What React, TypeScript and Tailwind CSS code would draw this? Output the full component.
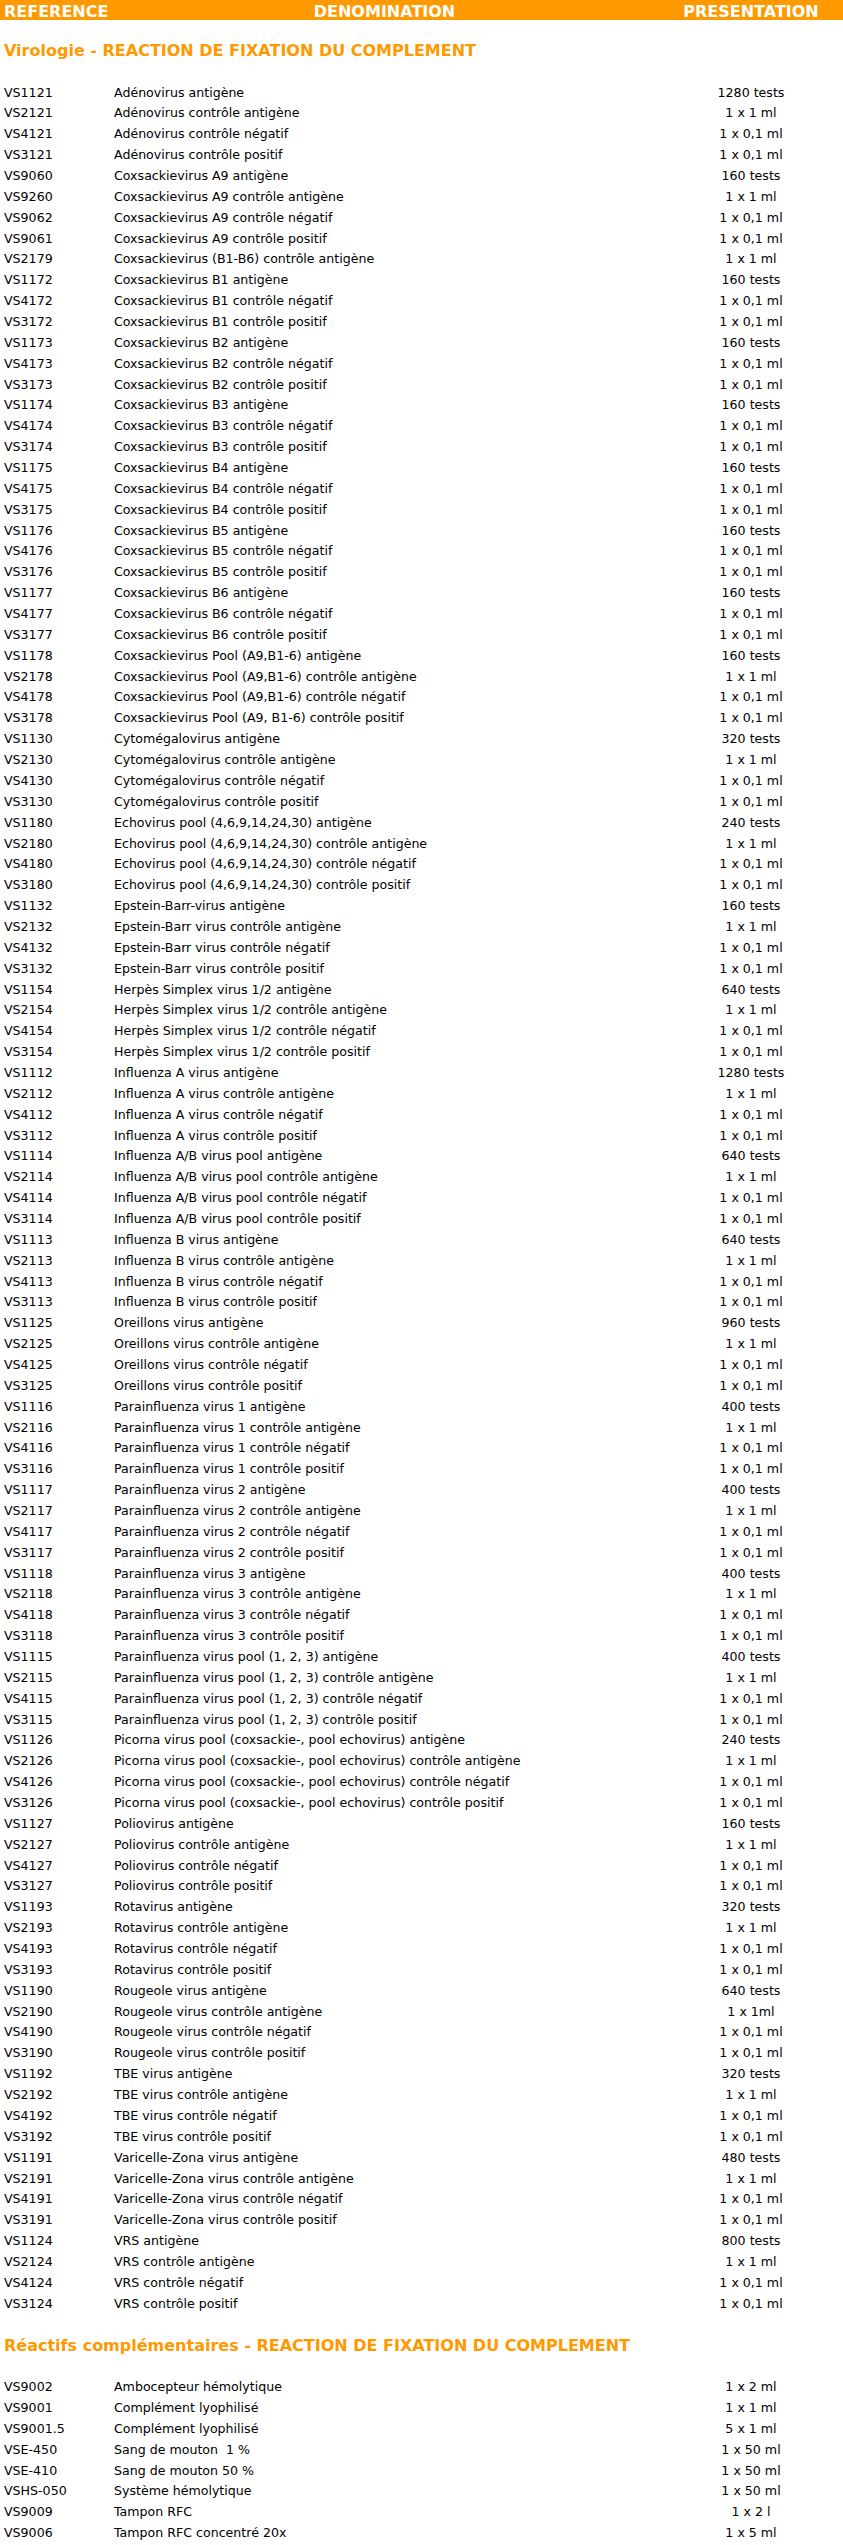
import React from "react";

type Row = [string, string, string];

const quad = (name: string, s: string, tests: string, ctrlAg = "1 x 1 ml"): Row[] => [
  [`VS1${s}`, `${name} antigène`, tests],
  [`VS2${s}`, `${name} contrôle antigène`, ctrlAg],
  [`VS4${s}`, `${name} contrôle négatif`, "1 x 0,1 ml"],
  [`VS3${s}`, `${name} contrôle positif`, "1 x 0,1 ml"],
];

const coxB: Row[] = [1, 2, 3, 4, 5, 6].flatMap((n): Row[] => [
  [`VS117${n + 1}`, `Coxsackievirus B${n} antigène`, "160 tests"],
  [`VS417${n + 1}`, `Coxsackievirus B${n} contrôle négatif`, "1 x 0,1 ml"],
  [`VS317${n + 1}`, `Coxsackievirus B${n} contrôle positif`, "1 x 0,1 ml"],
]);

const virologie: Row[] = [
  ...quad("Adénovirus", "121", "1280 tests"),
  ["VS9060", "Coxsackievirus A9 antigène", "160 tests"],
  ["VS9260", "Coxsackievirus A9 contrôle antigène", "1 x 1 ml"],
  ["VS9062", "Coxsackievirus A9 contrôle négatif", "1 x 0,1 ml"],
  ["VS9061", "Coxsackievirus A9 contrôle positif", "1 x 0,1 ml"],
  ["VS2179", "Coxsackievirus (B1-B6) contrôle antigène", "1 x 1 ml"],
  ...coxB,
  ["VS1178", "Coxsackievirus Pool (A9,B1-6) antigène", "160 tests"],
  ["VS2178", "Coxsackievirus Pool (A9,B1-6) contrôle antigène", "1 x 1 ml"],
  ["VS4178", "Coxsackievirus Pool (A9,B1-6) contrôle négatif", "1 x 0,1 ml"],
  ["VS3178", "Coxsackievirus Pool (A9, B1-6) contrôle positif", "1 x 0,1 ml"],
  ...quad("Cytomégalovirus", "130", "320 tests"),
  ...quad("Echovirus pool (4,6,9,14,24,30)", "180", "240 tests"),
  ["VS1132", "Epstein-Barr-virus antigène", "160 tests"],
  ["VS2132", "Epstein-Barr virus contrôle antigène", "1 x 1 ml"],
  ["VS4132", "Epstein-Barr virus contrôle négatif", "1 x 0,1 ml"],
  ["VS3132", "Epstein-Barr virus contrôle positif", "1 x 0,1 ml"],
  ...quad("Herpès Simplex virus 1/2", "154", "640 tests"),
  ...quad("Influenza A virus", "112", "1280 tests"),
  ...quad("Influenza A/B virus pool", "114", "640 tests"),
  ...quad("Influenza B virus", "113", "640 tests"),
  ...quad("Oreillons virus", "125", "960 tests"),
  ...quad("Parainfluenza virus 1", "116", "400 tests"),
  ...quad("Parainfluenza virus 2", "117", "400 tests"),
  ...quad("Parainfluenza virus 3", "118", "400 tests"),
  ...quad("Parainfluenza virus pool (1, 2, 3)", "115", "400 tests"),
  ...quad("Picorna virus pool (coxsackie-, pool echovirus)", "126", "240 tests"),
  ...quad("Poliovirus", "127", "160 tests"),
  ...quad("Rotavirus", "193", "320 tests"),
  ...quad("Rougeole virus", "190", "640 tests", "1 x 1ml"),
  ...quad("TBE virus", "192", "320 tests"),
  ...quad("Varicelle-Zona virus", "191", "480 tests"),
  ...quad("VRS", "124", "800 tests"),
];

const reactifs: Row[] = [
  ["VS9002", "Ambocepteur hémolytique", "1 x 2 ml"],
  ["VS9001", "Complément lyophilisé", "1 x 1 ml"],
  ["VS9001.5", "Complément lyophilisé", "5 x 1 ml"],
  ["VSE-450", "Sang de mouton\u00a0 1 %", "1 x 50 ml"],
  ["VSE-410", "Sang de mouton 50 %", "1 x 50 ml"],
  ["VSHS-050", "Système hémolytique", "1 x 50 ml"],
  ["VS9009", "Tampon RFC", "1 x 2 l"],
  ["VS9006", "Tampon RFC concentré 20x", "1 x 5 ml"],
];

function DataRow({ r }: { r: Row }) {
  return (
    <div className="grid h-[20.87px] grid-cols-[110px_549px_184px] items-center text-[12.6px] text-black">
      <div className="pl-[4px] whitespace-nowrap">{r[0]}</div>
      <div className="pl-[4px] whitespace-nowrap">{r[1]}</div>
      <div className="text-center whitespace-nowrap">{r[2]}</div>
    </div>
  );
}

function Title({ first, rest }: { first: string; rest: string }) {
  return (
    <div className="flex h-[20.87px] items-center pl-[4px] text-[16px] font-bold whitespace-nowrap">
      <span className="text-[#ff9900]">{first}</span>
      <span className="text-[#ff9900]">&nbsp;-&nbsp;{rest}</span>
    </div>
  );
}

export default function App() {
  return (
    <div className="w-[843px] bg-white font-['DejaVu_Sans',sans-serif]">
      <div className="grid h-[20px] grid-cols-[110px_549px_184px] items-center bg-[#ff9900] text-[16px] font-bold text-white">
        <div className="pl-[4px]">REFERENCE</div>
        <div className="text-center">DENOMINATION</div>
        <div className="text-center">PRESENTATION</div>
      </div>
      <div className="h-[20.87px]" />
      <Title first="Virologie" rest="REACTION DE FIXATION DU COMPLEMENT" />
      <div className="h-[20.87px]" />
      {virologie.map((r, i) => (
        <DataRow key={"v" + i} r={r} />
      ))}
      <div className="h-[20.87px]" />
      <Title first="Réactifs complémentaires" rest="REACTION DE FIXATION DU COMPLEMENT" />
      <div className="h-[20.87px]" />
      {reactifs.map((r, i) => (
        <DataRow key={"r" + i} r={r} />
      ))}
    </div>
  );
}
